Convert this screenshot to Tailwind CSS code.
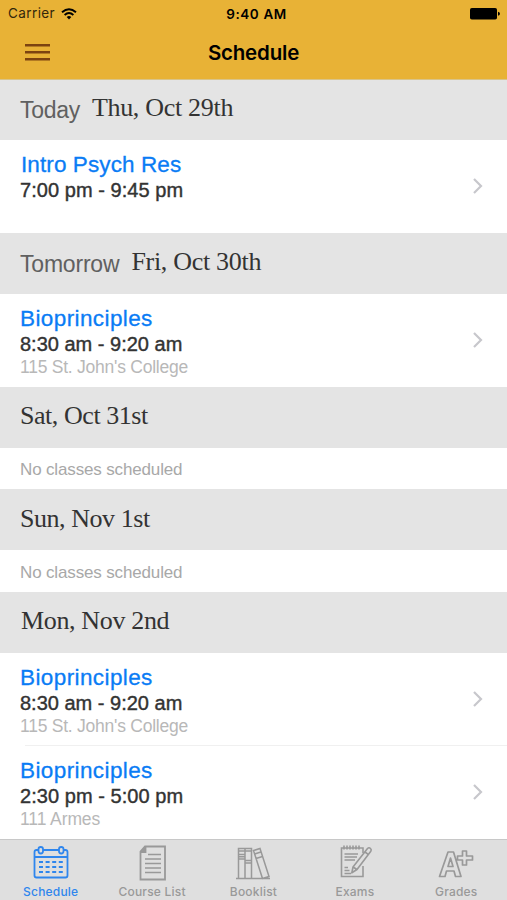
<!DOCTYPE html>
<html lang="en">
<head>
<meta charset="utf-8">
<title>Schedule</title>
<script src="https://cdn.jsdelivr.net/npm/@tailwindcss/browser@4"></script>
</head>
<body class="bg-white">
<div class="flex h-[900px] w-[507px] flex-col overflow-hidden bg-white font-['Liberation_Sans',sans-serif] whitespace-nowrap text-[#333]">
  <header class="flex h-[80px] shrink-0 flex-col border-b border-[#d9c48a] bg-[#e8b236] font-[Inter,sans-serif] text-black">
    <div class="grid h-[27px] grid-cols-3 items-center pr-[7px] pl-[8px] text-[13.5px]">
      <div class="flex items-center gap-[6px] text-[#33270b]"><span class="tracking-[0.4px]">Carrier</span>
        <svg class="h-[12px] w-[16px] text-black" viewBox="0 0 16 12" fill="none" stroke="currentColor" stroke-width="1.9"><path d="M1 4.2Q8-1.8 15 4.2M3.6 7Q8 3.2 12.4 7"/><path d="M5.7 9Q8 7 10.3 9L8 11.4Z" fill="currentColor" stroke="none"/></svg>
      </div>
      <span class="pt-[1px] pl-[5px] text-center font-semibold tracking-[0.6px]">9:40 AM</span>
      <svg class="h-[12px] w-[30px] justify-self-end" viewBox="0 0 30 12"><rect width="27" height="11.5" rx="1.8"/><path d="M28 3.7q2 .4 2 2t-2 2z"/></svg>
    </div>
    <div class="grid h-[52px] grid-cols-3 items-center px-[25px]">
      <svg class="mt-[-2px] h-[17px] w-[25px]" viewBox="0 0 25 17" fill="#7c4310"><path d="M0 0h25v2.6H0zM0 7h25v2.6H0zM0 14h25v2.6H0z"/></svg>
      <h1 class="text-center text-[20.5px] font-semibold tracking-[-0.2px]">Schedule</h1>
    </div>
  </header>

  <main class="flex flex-1 flex-col">
    <h2 class="flex h-[60px] items-baseline gap-[12px] bg-[#e4e4e4] pt-[13px] pl-[20px]"><span class="text-[23px] leading-[34px] tracking-[-0.3px] text-[#606060]">Today</span><span class="relative top-[-2px] font-['Liberation_Serif',serif] text-[26px] leading-[34px] tracking-[-0.3px]">Thu, Oct 29th</span></h2>
    <section class="flex h-[93px] items-center justify-between pr-[24px] pl-[20px]">
      <div class="h-[73px]"><h3 class="pt-px pl-px text-[22.5px] leading-[27px] tracking-[0.1px] text-[#0a7cf5] [-webkit-text-stroke:0.3px]">Intro Psych Res</h3><p class="text-[20px] leading-[24px] tracking-[0.05px] [-webkit-text-stroke:0.4px]">7:00 pm - 9:45 pm</p></div>
      <svg class="mt-[-2px] h-[16px] w-[10px]" viewBox="0 0 10 16" fill="none" stroke="#c7c7cc" stroke-width="2.2"><path d="m1 1 7 7-7 7"/></svg>
    </section>

    <h2 class="flex h-[61px] items-baseline gap-[12px] bg-[#e4e4e4] pt-[14px] pl-[20px]"><span class="text-[23px] leading-[34px] tracking-[-0.2px] text-[#606060]">Tomorrow</span><span class="relative top-[-2px] font-['Liberation_Serif',serif] text-[26px] leading-[34px] tracking-[-0.3px]">Fri, Oct 30th</span></h2>
    <section class="flex h-[93px] items-center justify-between pr-[24px] pl-[20px]">
      <div class="h-[73px]"><h3 class="pt-px text-[22.5px] leading-[27px] tracking-[0.4px] text-[#0a7cf5] [-webkit-text-stroke:0.3px]">Bioprinciples</h3><p class="text-[20px] leading-[24px] [-webkit-text-stroke:0.4px]">8:30 am - 9:20 am</p><p class="text-[17.5px] leading-[22px] tracking-[-0.24px] text-[#b8b8b8]">115 St. John's College</p></div>
      <svg class="mt-[-2px] h-[16px] w-[10px]" viewBox="0 0 10 16" fill="none" stroke="#c7c7cc" stroke-width="2.2"><path d="m1 1 7 7-7 7"/></svg>
    </section>

    <h2 class="h-[61px] bg-[#e4e4e4] pt-[12px] pl-[20px] font-['Liberation_Serif',serif] text-[26px] leading-[34px] tracking-[-0.45px]"><span>Sat, Oct 31st</span></h2>
    <p class="h-[41px] pl-[20px] text-[17px] leading-[43px] tracking-[-0.15px] text-[#a8a8a8]"><span>No classes scheduled</span></p>
    <h2 class="h-[61px] bg-[#e4e4e4] pt-[13px] pl-[20px] font-['Liberation_Serif',serif] text-[26px] leading-[34px] tracking-[-0.45px]"><span>Sun, Nov 1st</span></h2>
    <p class="h-[42px] pl-[20px] text-[17px] leading-[45px] tracking-[-0.15px] text-[#a8a8a8]"><span>No classes scheduled</span></p>
    <h2 class="h-[61px] bg-[#e4e4e4] pt-[12px] pl-[21px] font-['Liberation_Serif',serif] text-[26px] leading-[34px] tracking-[-0.35px]"><span>Mon, Nov 2nd</span></h2>
    <section class="flex h-[92px] items-center justify-between pr-[24px] pl-[20px]">
      <div class="h-[73px]"><h3 class="pt-px text-[22.5px] leading-[27px] tracking-[0.4px] text-[#0a7cf5] [-webkit-text-stroke:0.3px]">Bioprinciples</h3><p class="text-[20px] leading-[24px] [-webkit-text-stroke:0.4px]">8:30 am - 9:20 am</p><p class="text-[17.5px] leading-[22px] tracking-[-0.24px] text-[#b8b8b8]">115 St. John's College</p></div>
      <svg class="h-[16px] w-[10px]" viewBox="0 0 10 16" fill="none" stroke="#c7c7cc" stroke-width="2.2"><path d="m1 1 7 7-7 7"/></svg>
    </section>
    <hr class="ml-[25px] border-[#f0f0f0]">
    <section class="flex h-[93px] items-center justify-between pr-[24px] pl-[20px]">
      <div class="h-[73px]"><h3 class="pt-px text-[22.5px] leading-[27px] tracking-[0.4px] text-[#0a7cf5] [-webkit-text-stroke:0.3px]">Bioprinciples</h3><p class="text-[20px] leading-[24px] tracking-[0.05px] [-webkit-text-stroke:0.4px]">2:30 pm - 5:00 pm</p><p class="text-[17.5px] leading-[22px] tracking-[-0.1px] text-[#b8b8b8]">111 Armes</p></div>
      <svg class="mt-[-2px] h-[16px] w-[10px]" viewBox="0 0 10 16" fill="none" stroke="#c7c7cc" stroke-width="2.2"><path d="m1 1 7 7-7 7"/></svg>
    </section>
  </main>

  <nav class="grid h-[61px] shrink-0 grid-cols-5 border-t border-[#c8c8c8] bg-[#dfdfdf] font-[Inter,sans-serif] text-[12px] leading-[14px] font-medium tracking-[0.2px] text-[#999]">
    <div class="flex flex-col items-center gap-[2px] pt-[5px] text-[#2f86ed]">
      <svg class="h-[38px] w-[40px]" viewBox="0 0 40 38" fill="none" stroke="currentColor" stroke-width="1.8"><path d="M7 5H5.500Q3.500 5 3.500 7v23.500q0 2 2 2h29q2 0 2-2V7q0-2-2-2H33M12 5h16M3.500 12h33"/><rect x="7.500" y="2" width="4.500" height="6.500" rx="2.200"/><rect x="28" y="2" width="4.500" height="6.500" rx="2.200"/><path stroke-width="2.200" stroke-dasharray="4 2.600" d="M8 17h24M8 22h24M8 27h24"/></svg>
      <span>Schedule</span>
    </div>
    <div class="flex flex-col items-center gap-[2px] pt-[5px]">
      <svg class="h-[38px] w-[40px]" viewBox="0 0 40 38" fill="none" stroke="currentColor" stroke-width="1.800"><path d="M13 1.500H33V34.500H8.500V6.500Z"/><path d="M13.500 1.500V7h-5" fill="currentColor"/><path stroke-width="1.600" d="M16 9.500h13M13 14h16M13 18.500h16M13 23h16M13 27.500h16"/></svg>
      <span>Course List</span>
    </div>
    <div class="flex flex-col items-center gap-[2px] pt-[5px]">
      <svg class="h-[38px] w-[40px]" viewBox="0 0 40 38" fill="none" stroke="currentColor" stroke-width="1.500"><path d="M3 33.500h34M5.500 33.500V3.500H12v30M12 33.500V3.500h6.500v30M5.500 6h13M5.500 9.500H12M5.500 11.700H12M5.500 14H12M12 15.500h6.500M12 18h6.500M20.500 5.500l6.500-2 9 28-6.500 2ZM21.500 9l6.500-2M23 13.500l6.500-2"/></svg>
      <span>Booklist</span>
    </div>
    <div class="flex flex-col items-center gap-[2px] pt-[5px]">
      <svg class="h-[38px] w-[40px]" viewBox="0 0 40 38" fill="none" stroke="currentColor" stroke-width="1.600"><path d="M28 8V3H6.500v28.500H28V21"/><path d="M9 .5v4M12 .5v4M15 .5v4M18 .5v4M21 .5v4M24 .5v4M9.500 9H23M9.500 12H22M9.500 15H20M9.500 22.500h3.500M9.500 25.500h5M9.500 28.500H16"/><path fill="#dfdfdf" stroke-linejoin="round" d="m32.500 3.500q1.500-1.500 3 0 1.300 1.300.3 2.800L22 24.500l-5.200 3.300 1.200-5.800ZM30 7l3.500 2.700M18 22l4 2.500"/></svg>
      <span>Exams</span>
    </div>
    <div class="flex flex-col items-center gap-[2px] pt-[5px]">
      <svg class="h-[38px] w-[40px]" viewBox="0 0 40 38" fill="none" stroke="currentColor" stroke-width="1.700" stroke-linejoin="round"><path d="M3.500 31.500 12 7H17.500l7.500 24.500h-5.500L18 26H10.500L9 31.500ZM12 21.500h5l-2.500-8.500ZM26.500 6H30.500v5h6V15h-6v5h-4v-5H21.500v-4h5Z"/></svg>
      <span>Grades</span>
    </div>
  </nav>
</div>
</body>
</html>
